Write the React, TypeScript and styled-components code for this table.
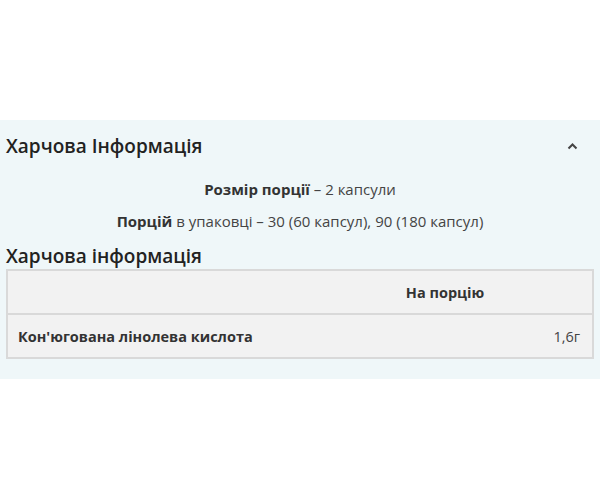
import React from "react";
import styled, { createGlobalStyle } from "styled-components";

const GlobalStyle = createGlobalStyle`
  html, body {
    margin: 0;
    padding: 0;
    background: #ffffff;
    font-family: "Open Sans", "Liberation Sans", sans-serif;
  }
`;

const Page = styled.div`
  width: 600px;
  height: 500px;
  padding-top: 120px;
  box-sizing: border-box;
`;

const Panel = styled.section`
  background: #eff7f9;
  padding: 0 6px 20px 6px;
`;

const Header = styled.div`
  display: flex;
  align-items: center;
  justify-content: space-between;
  height: 52px;
`;

const Title = styled.h2`
  margin: 0;
  font-size: 19px;
  font-weight: 600;
  line-height: 24px;
  color: #222;
`;

const Toggle = styled.button`
  border: none;
  background: none;
  padding: 0;
  margin-right: 14px;
  width: 16px;
  height: 16px;
  display: flex;
  align-items: center;
  justify-content: center;
`;

const Info = styled.div`
  display: flex;
  flex-direction: column;
  align-items: center;
  gap: 12px;
  padding-top: 7px;
`;

const InfoLine = styled.p`
  margin: 0;
  font-size: 15px;
  line-height: 20px;
  color: #444;
`;

const Label = styled.strong`
  font-weight: 700;
  color: #333;
`;

const SubTitle = styled.h3`
  margin: 13px 0 1px 0;
  font-size: 19px;
  font-weight: 600;
  line-height: 24px;
  color: #222;
`;

const Table = styled.table`
  width: 100%;
  border-collapse: collapse;
  background: #f2f2f2;
  border: 2px solid #d9d9d9;
  table-layout: fixed;
`;

const Cell = styled.td<{ $align?: string; $bold?: boolean }>`
  height: 42px;
  padding: 0 12px 0 10px;
  border-bottom: 2px solid #d9d9d9;
  font-size: 14.5px;
  color: ${(p) => (p.$bold ? "#333" : "#444")};
  font-weight: ${(p) => (p.$bold ? 700 : 400)};
  text-align: ${(p) => p.$align || "left"};
`;

const Chevron = () => (
  <svg width="11" height="7" viewBox="0 0 11 7">
    <path d="M1.5 5.5 L5.5 1.5 L9.5 5.5" fill="none" stroke="#444" strokeWidth="2" />
  </svg>
);

const App = () => {
  return (
    <Page>
      <GlobalStyle />
      <Panel>
        <Header>
          <Title>Харчова Інформація</Title>
          <Toggle aria-label="collapse">
            <Chevron />
          </Toggle>
        </Header>
        <Info>
          <InfoLine>
            <Label>Розмір порції</Label> – 2 капсули
          </InfoLine>
          <InfoLine>
            <Label>Порцій</Label> в упаковці – 30 (60 капсул), 90 (180 капсул)
          </InfoLine>
        </Info>
        <SubTitle>Харчова інформація</SubTitle>
        <Table>
          <tbody>
            <tr>
              <Cell />
              <Cell $align="center" $bold>
                На порцію
              </Cell>
            </tr>
            <tr>
              <Cell $bold>Кон'югована лінолева кислота</Cell>
              <Cell $align="right">1,6г</Cell>
            </tr>
          </tbody>
        </Table>
      </Panel>
    </Page>
  );
};

export default App;
